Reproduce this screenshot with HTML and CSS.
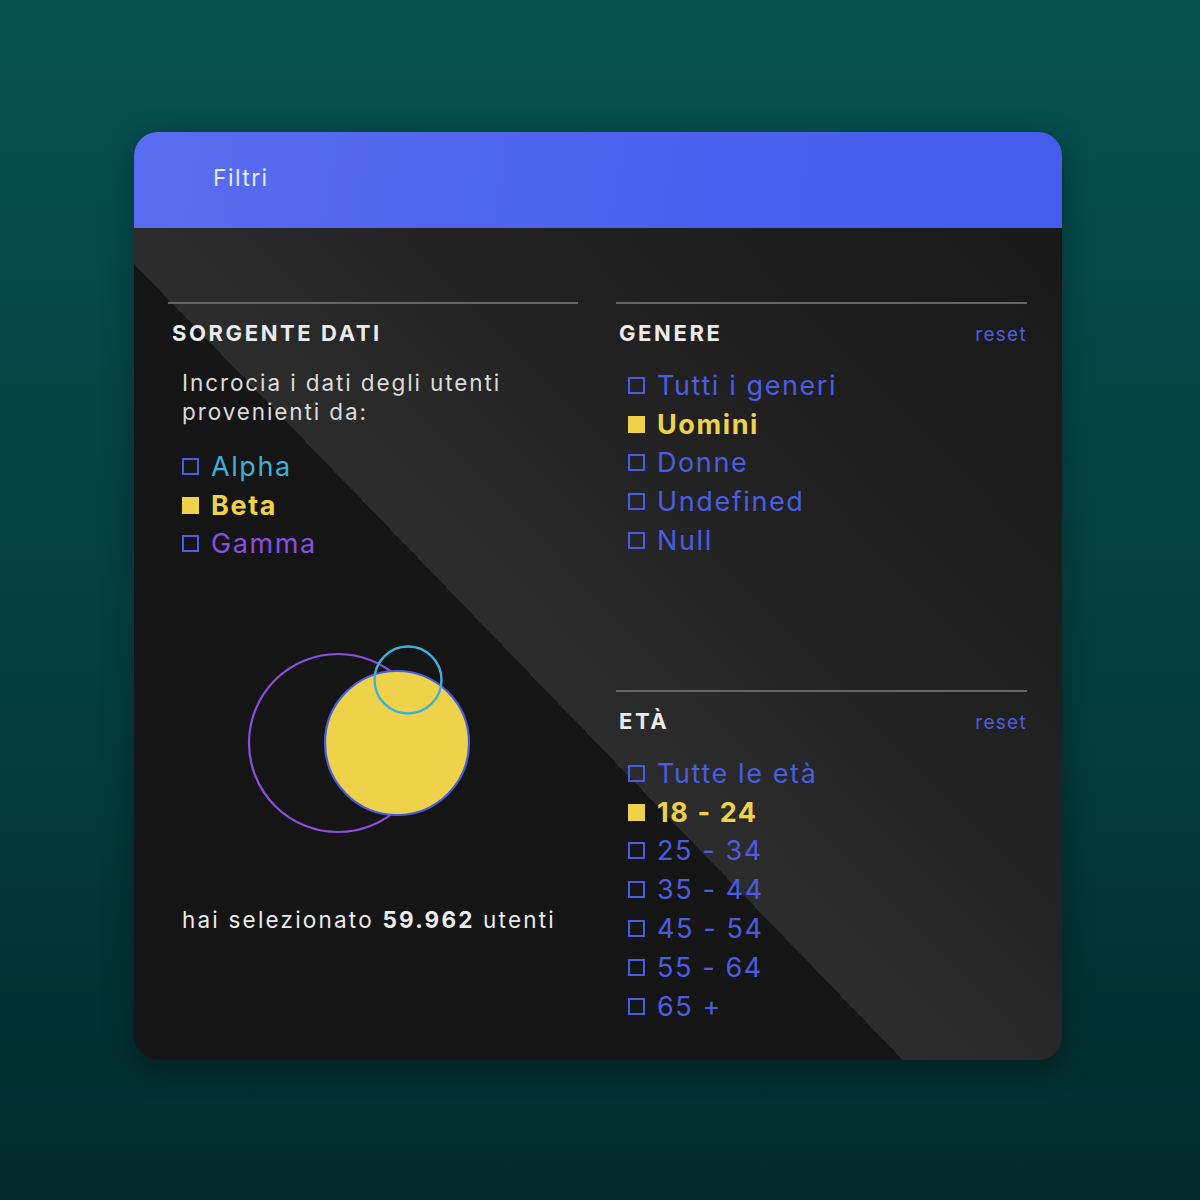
FILE: index.html
```html
<!DOCTYPE html>
<html lang="it">
<head>
<meta charset="utf-8">
<title>Filtri</title>
<link rel="stylesheet" href="styles.css">
</head>
<body>
<div class="card">
  <div class="card-header">Filtri</div>
  <div class="card-body">
    <div class="col col-left">
      <section class="panel panel-source">
        <div class="panel-head"><h2 class="panel-title">Sorgente dati</h2></div>
        <p class="desc">Incrocia i dati degli utenti<br>provenienti da:</p>
        <ul class="checklist">
          <li class="item alpha"><span class="box"></span>Alpha</li>
          <li class="item beta checked"><span class="box"></span>Beta</li>
          <li class="item gamma"><span class="box"></span>Gamma</li>
        </ul>
        <div class="venn">
          <svg width="240" height="210" viewBox="0 0 240 210">
            <circle cx="98" cy="107" r="89" fill="none" stroke="#8a4fe0" stroke-width="2.2"/>
            <circle cx="157" cy="107" r="72" fill="#eed34a" stroke="#4a5de0" stroke-width="2.2"/>
            <circle cx="168" cy="44" r="33.5" fill="none" stroke="#3fb0d8" stroke-width="2.4"/>
          </svg>
        </div>
        <p class="summary">hai selezionato <strong>59.962</strong> utenti</p>
      </section>
    </div>
    <div class="col col-right">
      <section class="panel panel-genre">
        <div class="panel-head"><h2 class="panel-title">Genere</h2><span class="reset">reset</span></div>
        <ul class="checklist list-right">
          <li class="item"><span class="box"></span>Tutti i generi</li>
          <li class="item checked"><span class="box"></span>Uomini</li>
          <li class="item"><span class="box"></span>Donne</li>
          <li class="item"><span class="box"></span>Undefined</li>
          <li class="item"><span class="box"></span>Null</li>
        </ul>
      </section>
      <section class="panel panel-age">
        <div class="panel-head"><h2 class="panel-title">Età</h2><span class="reset">reset</span></div>
        <ul class="checklist list-right">
          <li class="item"><span class="box"></span>Tutte le età</li>
          <li class="item checked"><span class="box"></span>18 - 24</li>
          <li class="item"><span class="box"></span>25 - 34</li>
          <li class="item"><span class="box"></span>35 - 44</li>
          <li class="item"><span class="box"></span>45 - 54</li>
          <li class="item"><span class="box"></span>55 - 64</li>
          <li class="item"><span class="box"></span>65 +</li>
        </ul>
      </section>
    </div>
  </div>
</div>
</body>
</html>
```

FILE: styles.css
```css
* { box-sizing: border-box; }
html, body { margin: 0; padding: 0; }
body {
  width: 1200px;
  height: 1200px;
  background: linear-gradient(180deg, #075151 0%, #04403f 50%, #032a2d 100%);
  font-family: "Inter", "Liberation Sans", sans-serif;
  overflow: hidden;
}
.card {
  width: 928px;
  height: 928px;
  margin: 132px 0 0 134px;
  border-radius: 24px;
  overflow: hidden;
  box-shadow: 0 8px 30px rgba(0,0,0,0.35);
  display: flex;
  flex-direction: column;
}
.card-header {
  height: 96px;
  flex: none;
  background: linear-gradient(100deg, #5a6cef 0%, #4b61ec 60%, #445dec 100%);
  color: #e6e9ff;
  font-size: 23px;
  padding: 0 0 4px 79px;
  display: flex;
  align-items: center;
  letter-spacing: 1.4px;
}
.card-body {
  flex: 1;
  background: linear-gradient(46deg, #151515 0%, #151515 44.4%, #2c2c2c 44.4%, #222 65%, #181818 100%);
  padding: 74px 35px 0 34px;
  display: grid;
  grid-template-columns: 410px 411px;
  column-gap: 38px;
  align-items: start;
}
.col { display: flex; flex-direction: column; }
.panel { border-top: 2px solid #666; }
.panel-head {
  display: flex;
  justify-content: space-between;
  align-items: baseline;
  padding: 16px 0 0 4px;
}
.panel-genre .panel-head, .panel-age .panel-head { padding-left: 3px; }
.panel-title {
  margin: 0;
  font-size: 22px;
  font-weight: 700;
  text-transform: uppercase;
  letter-spacing: 2.6px;
  color: #ececec;
  line-height: 26px;
}
.reset { color: #4a5de0; font-size: 19px; letter-spacing: 1.3px; }
.desc {
  margin: 22px 0 0 14px;
  color: #dcdcdc;
  font-size: 22.5px;
  line-height: 29px;
  letter-spacing: 1.9px;
}
.checklist { list-style: none; margin: 0; padding: 0; }
.panel-source .checklist { margin: 21px 0 0 14px; }
.list-right { margin: 20px 0 0 12px; }
.item {
  display: flex;
  align-items: center;
  height: 38.8px;
  font-size: 27px;
  color: #4a5de0;
  letter-spacing: 1.6px;
}
.box {
  width: 17px;
  height: 17px;
  border: 2.5px solid #4a5de0;
  margin-right: 12px;
  flex: none;
}
.item.checked { color: #efd24a; font-weight: 700; }
.item.checked .box { background: #efd24a; border-color: #efd24a; }
.alpha { color: #3fb0d8; }
.gamma { color: #8a4fe0; }
.venn { margin: 73px 0 0 72px; height: 210px; }
.venn svg { display: block; }
.summary {
  margin: 60px 0 0 14px;
  color: #ececec;
  font-size: 22.5px;
  letter-spacing: 2.2px;
}
.summary strong { font-weight: 700; }
.panel-genre { height: 388px; }
```
